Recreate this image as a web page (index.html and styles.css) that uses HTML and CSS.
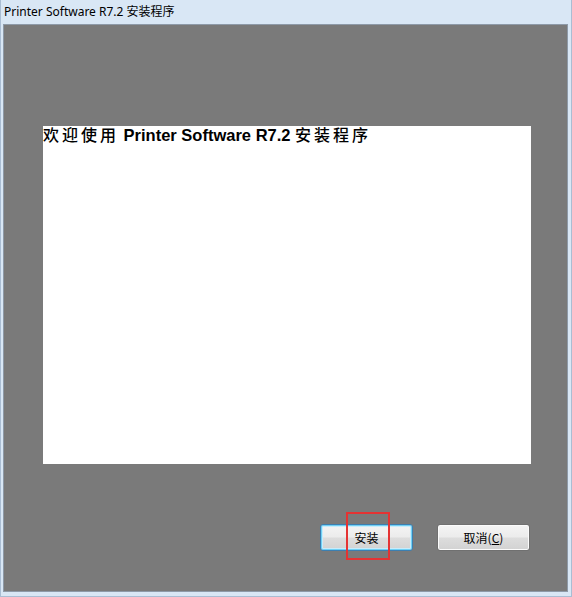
FILE: index.html
```html
<!DOCTYPE html>
<html>
<head>
<meta charset="utf-8">
<link rel="stylesheet" href="styles.css">
</head>
<body>
<div class="window">
  <div class="titlebar">Printer Software R7.2 安装程序</div>
  <div class="client">
    <div class="panel">
      <h1 class="heading"><span class="cjk">欢迎使用</span> Printer Software R7.2 <span class="cjk">安装程序</span></h1>
    </div>
    <div class="buttons">
      <button class="btn btn-default">安装<span class="highlight"></span></button>
      <button class="btn">取消(<u>C</u>)</button>
    </div>
  </div>
</div>
</body>
</html>
```
FILE: styles.css
```css
html, body {
  margin: 0;
  padding: 0;
}
body {
  width: 572px;
  height: 597px;
  overflow: hidden;
  font-family: "Noto Sans", "Noto Sans CJK SC", sans-serif;
}
.window {
  width: 572px;
  height: 597px;
  box-sizing: border-box;
  background: #d9e7f5;
  border-left: 1px solid #a9bdd3;
  border-right: 1px solid #a9bdd3;
  border-bottom: 1px solid #a9bdd3;
  display: flex;
  flex-direction: column;
  padding: 0 3px 4px 2px;
}
.titlebar {
  height: 24px;
  box-sizing: border-box;
  padding: 4px 0 0 1px;
  font-size: 12px;
  line-height: 16px;
  color: #000;
  font-family: "Noto Sans", "Noto Sans CJK SC", sans-serif;
}
.client {
  flex: 1;
  background: #7a7a7a;
  border: 1px solid #8e9aa8;
  box-sizing: border-box;
  padding: 101px 0 0 39px;
  display: flex;
  flex-direction: column;
}
.panel {
  width: 488px;
  height: 338px;
  background: #fff;
}
.heading {
  margin: 0;
  font-family: "Liberation Sans", "Noto Sans CJK SC", sans-serif;
  font-weight: bold;
  font-size: 16.5px;
  line-height: 17px;
  color: #000;
  white-space: nowrap;
}
.heading .cjk {
  font-family: "Noto Sans CJK SC", sans-serif;
  font-size: 16px;
  font-weight: 500;
  letter-spacing: 3px;
}
.buttons {
  display: flex;
  gap: 24px;
  margin-top: 60px;
  padding-left: 277px;
}
.btn {
  position: relative;
  width: 93px;
  height: 27px;
  box-sizing: border-box;
  border: 1px solid #707070;
  border-radius: 3px;
  background: linear-gradient(#f4f4f4 0%, #ececec 48%, #dddddd 52%, #d2d2d2 100%);
  box-shadow: inset 0 0 0 1px #fbfbfb;
  font-family: "Noto Sans CJK SC", sans-serif;
  font-size: 12px;
  color: #000;
  padding: 0;
  line-height: 25px;
}
.btn u {
  text-decoration: underline;
}
.btn-default {
  border-color: #3c7fb1;
  background: linear-gradient(#f4f4f4 0%, #ececec 48%, #dddddd 52%, #d2d2d2 100%);
  box-shadow: inset 0 0 0 1px #6fd0f5, inset 0 0 0 2px #c8ecfb;
}
.highlight {
  position: absolute;
  left: 25px;
  top: -13px;
  width: 44px;
  height: 48px;
  box-sizing: border-box;
  border: 2px solid #e53333;
}
```
